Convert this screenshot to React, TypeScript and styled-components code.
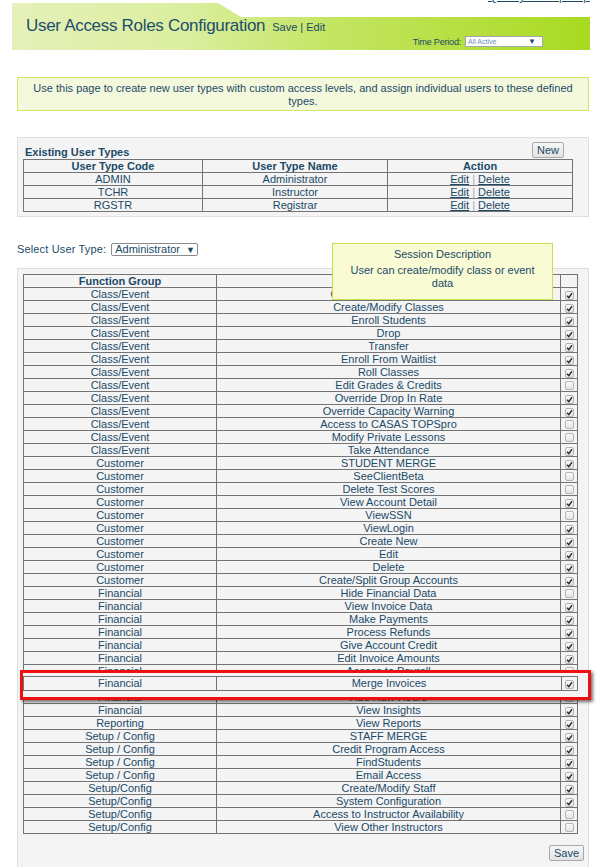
import React from "react";
import styled, { createGlobalStyle } from "styled-components";

const GlobalStyle = createGlobalStyle`
  html, body {
    margin: 0;
    padding: 0;
    background: #ffffff;
    overflow: hidden;
  }
  body {
    font-family: "Liberation Sans", Arial, sans-serif;
    color: #1b4a68;
  }
`;

interface FunctionRow {
  group: string;
  name: string;
  on: boolean;
}

const userTypes = [
  { code: "ADMIN", name: "Administrator" },
  { code: "TCHR", name: "Instructor" },
  { code: "RGSTR", name: "Registrar" },
];

const rows: FunctionRow[] = [
  { group: "Class/Event", name: "Create/Modify Sessions", on: true },
  { group: "Class/Event", name: "Create/Modify Classes", on: true },
  { group: "Class/Event", name: "Enroll Students", on: true },
  { group: "Class/Event", name: "Drop", on: true },
  { group: "Class/Event", name: "Transfer", on: true },
  { group: "Class/Event", name: "Enroll From Waitlist", on: true },
  { group: "Class/Event", name: "Roll Classes", on: true },
  { group: "Class/Event", name: "Edit Grades & Credits", on: false },
  { group: "Class/Event", name: "Override Drop In Rate", on: true },
  { group: "Class/Event", name: "Override Capacity Warning", on: true },
  { group: "Class/Event", name: "Access to CASAS TOPSpro", on: false },
  { group: "Class/Event", name: "Modify Private Lessons", on: false },
  { group: "Class/Event", name: "Take Attendance", on: true },
  { group: "Customer", name: "STUDENT MERGE", on: true },
  { group: "Customer", name: "SeeClientBeta", on: false },
  { group: "Customer", name: "Delete Test Scores", on: false },
  { group: "Customer", name: "View Account Detail", on: true },
  { group: "Customer", name: "ViewSSN", on: false },
  { group: "Customer", name: "ViewLogin", on: true },
  { group: "Customer", name: "Create New", on: true },
  { group: "Customer", name: "Edit", on: true },
  { group: "Customer", name: "Delete", on: true },
  { group: "Customer", name: "Create/Split Group Accounts", on: true },
  { group: "Financial", name: "Hide Financial Data", on: false },
  { group: "Financial", name: "View Invoice Data", on: true },
  { group: "Financial", name: "Make Payments", on: true },
  { group: "Financial", name: "Process Refunds", on: true },
  { group: "Financial", name: "Give Account Credit", on: true },
  { group: "Financial", name: "Edit Invoice Amounts", on: true },
  { group: "Financial", name: "Access to Payroll", on: false },
  { group: "Financial", name: "Merge Invoices", on: true },
  { group: "Financial", name: "Add Raw Hours", on: false },
  { group: "Financial", name: "View Insights", on: true },
  { group: "Reporting", name: "View Reports", on: true },
  { group: "Setup / Config", name: "STAFF MERGE", on: true },
  { group: "Setup / Config", name: "Credit Program Access", on: true },
  { group: "Setup / Config", name: "FindStudents", on: true },
  { group: "Setup / Config", name: "Email Access", on: true },
  { group: "Setup/Config", name: "Create/Modify Staff", on: true },
  { group: "Setup/Config", name: "System Configuration", on: true },
  { group: "Setup/Config", name: "Access to Instructor Availability", on: false },
  { group: "Setup/Config", name: "View Other Instructors", on: false },
];

const Check = ({ on }: { on: boolean }) => (
  <CheckBox>
    {on && (
      <svg width="7" height="7" viewBox="0 0 7 7">
        <path d="M1 3.8 L2.8 5.6 L6 1.2" stroke="#2e2e2e" strokeWidth="1.5" fill="none" />
      </svg>
    )}
  </CheckBox>
);

const App = () => {
  return (
    <Page>
      <GlobalStyle />
      <TopBar>
        <TopLink>Quality Pass | Help</TopLink>
      </TopBar>

      <Banner>
        <TitleGroup>
          <Title>User Access Roles Configuration</Title>
          <TitleLinks>Save | Edit</TitleLinks>
        </TitleGroup>
        <PeriodBox>
          <PeriodLabel>Time Period:</PeriodLabel>
          <PeriodSelect>
            <span>All Active</span>
            <Arrow>▼</Arrow>
          </PeriodSelect>
        </PeriodBox>
      </Banner>

      <InfoBox>
        Use this page to create new user types with custom access levels, and assign individual users to these defined
        types.
      </InfoBox>

      <TypesPanel>
        <PanelHead>
          <PanelTitle>Existing User Types</PanelTitle>
          <Button>New</Button>
        </PanelHead>
        <Grid>
          <colgroup>
            <col style={{ width: 179 }} />
            <col style={{ width: 185 }} />
            <col />
          </colgroup>
          <thead>
            <tr>
              <Th>User Type Code</Th>
              <Th>User Type Name</Th>
              <Th>Action</Th>
            </tr>
          </thead>
          <tbody>
            {userTypes.map((t) => (
              <tr key={t.code}>
                <Td>{t.code}</Td>
                <Td>{t.name}</Td>
                <Td>
                  <ActionLink>Edit</ActionLink> <Sep>|</Sep> <ActionLink>Delete</ActionLink>
                </Td>
              </tr>
            ))}
          </tbody>
        </Grid>
      </TypesPanel>

      <SelectRow>
        Select User Type:
        <TypeSelect>
          Administrator <SmallArrow>▼</SmallArrow>
        </TypeSelect>
        <Tooltip>
          <TipTitle>Session Description</TipTitle>
          <div>User can create/modify class or event data</div>
        </Tooltip>
      </SelectRow>

      <RightsPanel>
        <TableWrap>
          <Grid>
            <colgroup>
              <col style={{ width: 193 }} />
              <col />
              <col style={{ width: 17 }} />
            </colgroup>
            <thead>
              <tr>
                <Th>Function Group</Th>
                <Th>Function Name</Th>
                <Th></Th>
              </tr>
            </thead>
            <tbody>
              {rows.map((r) => (
                <tr key={r.name}>
                  <Td>{r.group}</Td>
                  <Td>{r.name}</Td>
                  <Td>
                    <Check on={r.on} />
                  </Td>
                </tr>
              ))}
            </tbody>
          </Grid>
          <Highlight>
            <HighlightRow>
              <span>Financial</span>
              <span>Merge Invoices</span>
              <span>
                <Check on={true} />
              </span>
            </HighlightRow>
          </Highlight>
        </TableWrap>
        <Footer>
          <Button>Save</Button>
        </Footer>
      </RightsPanel>
    </Page>
  );
};

export default App;

const Page = styled.div`
  width: 596px;
  height: 867px;
  overflow: hidden;
  font-size: 11px;
`;

const TopBar = styled.div`
  height: 3px;
  overflow: hidden;
  padding-left: 488px;
  white-space: nowrap;
  font-size: 12px;
  line-height: 12px;
  color: #1b4a68;
`;

const TopLink = styled.a`
  display: block;
  margin-top: -10px;
  text-decoration: underline;
`;

const Banner = styled.div`
  margin: 0 6px 0 12px;
  height: 47px;
  display: flex;
  align-items: flex-start;
  padding: 13px 0 0 14px;
  box-sizing: border-box;
  background: linear-gradient(to right, #e5f1b9 0%, #dbee9f 30%, #c4e563 55%, #a9da21 100%);
  clip-path: polygon(0 0, 206px 0, 229px 14px, 100% 14px, 100% 100%, 0 100%);
`;

const TitleGroup = styled.div`
  display: flex;
  align-items: baseline;
  gap: 7px;
`;

const Title = styled.div`
  font-size: 17px;
  letter-spacing: -0.3px;
  line-height: 20px;
  color: #1d4d6c;
  white-space: nowrap;
`;

const TitleLinks = styled.div`
  font-size: 11px;
  color: #1b4a68;
  white-space: nowrap;
`;

const PeriodBox = styled.div`
  margin: 20px 47px 0 auto;
  display: flex;
  align-items: center;
  gap: 4px;
`;

const PeriodLabel = styled.span`
  font-size: 9px;
  color: #1b4a68;
  letter-spacing: -0.2px;
`;

const PeriodSelect = styled.div`
  width: 78px;
  height: 11px;
  box-sizing: border-box;
  background: #fff;
  border: 1px solid #a6a6a6;
  display: flex;
  align-items: center;
  justify-content: space-between;
  padding: 0 6px 0 2px;
  font-size: 7px;
  color: #6b8fb8;
`;

const Arrow = styled.span`
  font-size: 8px;
  color: #1b4a68;
`;

const InfoBox = styled.div`
  margin: 27px 7px 0 17px;
  height: 34px;
  box-sizing: border-box;
  padding: 4px 10px 0;
  background: #f4f9dd;
  border: 1px solid #d3e56a;
  text-align: center;
  font-size: 11px;
  line-height: 13px;
  color: #1b4a68;
`;

const TypesPanel = styled.div`
  margin: 26px 7px 0 17px;
  height: 80px;
  box-sizing: border-box;
  padding: 5px 15px 0 5px;
  background: #f4f4f4;
  border: 1px solid #dedede;
`;

const PanelHead = styled.div`
  display: flex;
  align-items: flex-end;
  justify-content: space-between;
  height: 16px;
  padding: 0 9px 0 2px;
`;

const PanelTitle = styled.span`
  font-weight: bold;
  font-size: 11px;
  line-height: 13px;
`;

const Button = styled.button`
  font-family: "Liberation Sans", Arial, sans-serif;
  font-size: 11px;
  color: #1b4a68;
  height: 16px;
  padding: 0 4px;
  line-height: 14px;
  background: linear-gradient(#f7f7f7, #e3e3e3);
  border: 1px solid #a9a9a9;
  border-radius: 2px;
  margin-bottom: 1px;
`;

const Grid = styled.table`
  width: 100%;
  border-collapse: collapse;
  table-layout: fixed;
  border: 1px solid #747474;
`;

const Th = styled.th`
  border: 1px solid #747474;
  font-weight: bold;
  font-size: 11px;
  line-height: 12px;
  height: 12px;
  padding: 0;
  text-align: center;
  white-space: nowrap;
  overflow: hidden;
`;

const Td = styled.td`
  border: 1px solid #747474;
  font-size: 11px;
  line-height: 12px;
  height: 12px;
  padding: 0;
  text-align: center;
  white-space: nowrap;
  overflow: hidden;
`;

const ActionLink = styled.a`
  text-decoration: underline;
  color: #1b4a68;
`;

const Sep = styled.span`
  color: #9aa8b3;
`;

const SelectRow = styled.div`
  position: relative;
  margin: 26px 0 0 17px;
  height: 12px;
  display: flex;
  align-items: center;
  gap: 5px;
  font-size: 11px;
  letter-spacing: 0.15px;
`;

const TypeSelect = styled.div`
  width: 87px;
  height: 13px;
  box-sizing: border-box;
  border: 1px solid #8a8a8a;
  background: #fff;
  padding: 0 0 0 3px;
  line-height: 11px;
  font-size: 11px;
  border-radius: 2px;
  letter-spacing: 0;
`;

const SmallArrow = styled.span`
  font-size: 9px;
  margin-left: 3px;
`;

const Tooltip = styled.div`
  position: absolute;
  left: 315px;
  top: 0;
  width: 221px;
  height: 57px;
  box-sizing: border-box;
  padding: 4px 14px 0;
  background: #f8fbd3;
  border: 1px solid #c9e24c;
  text-align: center;
  font-size: 11px;
  line-height: 13px;
  letter-spacing: 0;
  z-index: 2;
`;

const TipTitle = styled.div`
  margin-bottom: 3px;
`;

const RightsPanel = styled.div`
  margin: 13px 7px 0 17px;
  height: 620px;
  box-sizing: border-box;
  padding: 5px 10px 0 5px;
  background: #f4f4f4;
  border: 1px solid #dedede;
`;

const TableWrap = styled.div`
  position: relative;
`;

const Highlight = styled.div`
  position: absolute;
  left: -3px;
  right: -13px;
  top: 396px;
  height: 30px;
  box-sizing: border-box;
  border: 3px solid #ee1010;
  background: #f4f4f4;
  box-shadow: 2px 2px 3px rgba(0, 0, 0, 0.55);
  padding: 3px 10px 0 0;
`;

const HighlightRow = styled.div`
  display: grid;
  grid-template-columns: 193px 1fr 17px;
  height: 13px;
  border-top: 1px solid #747474;
  border-bottom: 1px solid #747474;
  line-height: 12px;
  text-align: center;
  & > span {
    border-left: 1px solid #747474;
  }
  & > span:last-child {
    border-right: 1px solid #747474;
  }
`;

const CheckBox = styled.span`
  display: inline-flex;
  align-items: center;
  justify-content: center;
  width: 9px;
  height: 9px;
  box-sizing: border-box;
  border: 1px solid #b4b4b4;
  border-radius: 2px;
  background: linear-gradient(#fafafa, #e4e4e4);
  vertical-align: -1px;
`;

const Footer = styled.div`
  display: flex;
  justify-content: flex-end;
  padding: 11px 0 0;
  margin-right: -6px;
`;
